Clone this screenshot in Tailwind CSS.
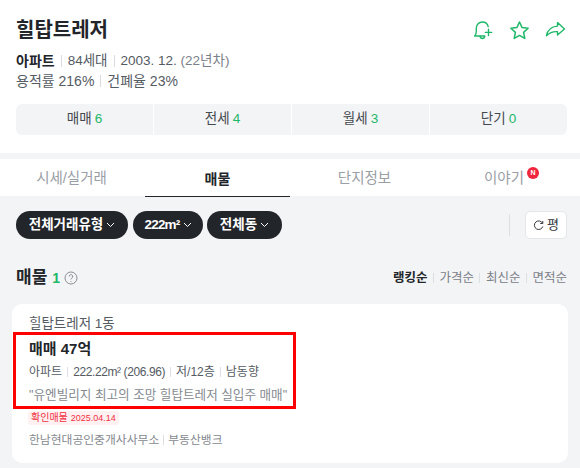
<!DOCTYPE html>
<html lang="ko">
<head>
<meta charset="UTF-8">
<title>힐탑트레저</title>
<script src="https://cdn.jsdelivr.net/npm/@tailwindcss/browser@4"></script>
</head>
<body class="bg-[#f3f4f6] text-[#222529] font-['Liberation_Sans','Noto_Sans_CJK_KR',sans-serif] overflow-hidden">
<div class="relative w-[580px] h-[468px] overflow-hidden">

  <!-- Header -->
  <header class="bg-white h-[153px] pl-4 pr-[13px] pt-[16px]">
    <div class="flex items-center justify-between h-[28px]">
      <h1 class="text-[20px] font-bold leading-[28px]">힐탑트레저</h1>
      <div class="flex items-center gap-[15px] mr-[1px]">
        <svg class="w-[21px] h-[21px]" viewBox="0 0 21 21" fill="none" stroke="#1fb868" stroke-width="1.4" stroke-linejoin="round" stroke-linecap="round"><path d="M11.500 16H1.600c1.300-1.300 1.700-2.400 1.700-4.500V8a6 6 0 0 1 6-6c3 0 5.300 2 5.900 4.600"/><path d="M7 16.200c.2 1.500 1.100 2.300 2.400 2.300s2.200-.8 2.400-2.300"/><path d="M15.500 9.200v6.400M12.300 12.400h6.400"/></svg>
        <svg class="w-[21px] h-[21px]" viewBox="0 0 21 21" fill="none" stroke="#1fb868" stroke-width="1.5" stroke-linejoin="round"><path d="M10.500 2l2.600 5.600 6 .7-4.500 4.100 1.200 6-5.300-3-5.300 3 1.200-6-4.500-4.100 6-.7z"/></svg>
        <svg class="w-[21px] h-[21px]" viewBox="0 0 21 21" fill="none" stroke="#1fb868" stroke-width="1.4" stroke-linejoin="round"><path d="M12.500 2.600l7 6.400-7 6v-3.300c-4.200-.3-7.800.8-11 4 .8-5 4.300-9 11-9.600z"/></svg>
      </div>
    </div>
    <div class="mt-[7px] text-[13.5px] leading-[20px] text-[#555b63]">
      <div class="flex items-center">
        <b class="text-[#222529] font-bold text-[14px]">아파트</b>
        <i class="w-px h-[12px] bg-[#d8dbe0] mx-[6px]"></i>
        <span>84세대</span>
        <i class="w-px h-[12px] bg-[#d8dbe0] mx-[6px]"></i>
        <span>2003. 12. <span class="text-[#7b8088]">(22년차)</span></span>
      </div>
      <div class="flex items-center text-[14px]">
        <span>용적률 216%</span>
        <i class="w-px h-[12px] bg-[#d8dbe0] mx-[6px]"></i>
        <span>건폐율 23%</span>
      </div>
    </div>
    <div class="mt-[13px] h-[31px] grid grid-cols-4 gap-px rounded-[6px] overflow-hidden text-[13.5px] text-[#44494f]">
      <div class="bg-[#f3f4f6] flex items-center justify-center gap-[3px]">매매 <span class="text-[#1fb868]">6</span></div>
      <div class="bg-[#f3f4f6] flex items-center justify-center gap-[3px]">전세 <span class="text-[#1fb868]">4</span></div>
      <div class="bg-[#f3f4f6] flex items-center justify-center gap-[3px]">월세 <span class="text-[#1fb868]">3</span></div>
      <div class="bg-[#f3f4f6] flex items-center justify-center gap-[3px]">단기 <span class="text-[#1fb868]">0</span></div>
    </div>
  </header>

  <!-- Tabs -->
  <nav class="mt-[6px] bg-white h-[37px] grid grid-cols-4 text-[14.5px] text-[#9a9ea5]">
    <div class="flex items-center justify-center pt-[3px] pr-[2px]">시세/실거래</div>
    <div class="flex items-center justify-center pt-[3px] -mb-px font-bold text-[14px] text-[#222529] border-b border-[#222529]">매물</div>
    <div class="flex items-center justify-center pt-[3px] pl-[4px]">단지정보</div>
    <div class="flex items-center justify-center pt-[3px] pr-[7px]">
      <span class="relative">이야기
        <span class="absolute -right-[15px] -top-[1px] w-[12px] h-[12px] rounded-full bg-[#f0263c] text-white text-[7px] font-bold leading-[12px] text-center">N</span>
      </span>
    </div>
  </nav>

  <!-- Filters -->
  <div class="flex items-center justify-between pl-4 pr-[13px] mt-[15px] h-[28px]">
    <div class="flex gap-[5px] text-[13.5px] font-bold text-white">
      <button class="h-[28px] w-[112px] rounded-full bg-[#222529] flex items-center justify-center gap-[3px]">전체거래유형<svg class="w-[9px] h-[6px]" viewBox="0 0 9 6" fill="none" stroke="#fff"><path d="M1 1l3.500 3.500L8 1"/></svg></button>
      <button class="h-[28px] w-[70px] rounded-full bg-[#222529] flex items-center justify-center gap-[3px]"><span class="tracking-[-0.8px]">222m²</span><svg class="w-[9px] h-[6px]" viewBox="0 0 9 6" fill="none" stroke="#fff"><path d="M1 1l3.500 3.500L8 1"/></svg></button>
      <button class="h-[28px] w-[75px] -ml-px rounded-full bg-[#222529] flex items-center justify-center gap-[3px]">전체동<svg class="w-[9px] h-[6px]" viewBox="0 0 9 6" fill="none" stroke="#fff"><path d="M1 1l3.500 3.500L8 1"/></svg></button>
    </div>
    <div class="flex items-center gap-[15px]">
      <i class="w-px h-[22px] bg-[#dcdfe3]"></i>
      <button class="w-[42px] h-[28px] bg-white border border-[#e4e6ea] rounded-[5px] flex items-center justify-center gap-[3px] text-[13px] text-[#33373c]">
        <svg class="w-[11px] h-[11px]" viewBox="0 0 11 11" fill="none" stroke="#33373c" stroke-width="1"><path d="M9.500 3.200A4.300 4.300 0 1 0 9.800 6.500"/><path d="M9.800 1v2.500H7.300"/></svg>평
      </button>
    </div>
  </div>

  <!-- Section title -->
  <div class="flex items-center justify-between pl-4 pr-[13px] mt-[27px] h-[24px]">
    <div class="flex items-center">
      <h2 class="text-[17px] font-bold">매물</h2>
      <span class="ml-[5px] text-[14px] font-bold text-[#1fb868]">1</span>
      <svg class="ml-[4px] w-[14px] h-[14px]" viewBox="0 0 14 14" fill="none" stroke="#8a8e95"><circle cx="7" cy="7" r="6"/><path d="M5.200 5.500a1.800 1.800 0 1 1 2.700 1.500c-.6.400-.9.700-.9 1.400"/><path d="M7 10v.8"/></svg>
    </div>
    <div class="flex items-center text-[12.5px] text-[#7b8088]">
      <b class="text-[#222529] font-bold">랭킹순</b>
      <i class="w-px h-[10px] bg-[#dcdfe3] mx-[5.5px]"></i>
      <span>가격순</span>
      <i class="w-px h-[10px] bg-[#dcdfe3] mx-[5.5px]"></i>
      <span>최신순</span>
      <i class="w-px h-[10px] bg-[#dcdfe3] mx-[5.5px]"></i>
      <span>면적순</span>
    </div>
  </div>

  <!-- Listing card -->
  <article class="mx-[12px] mt-[14px] h-[159px] bg-white rounded-[10px] px-[17px] pt-[11px]">
    <div class="text-[13.5px] leading-[18px] text-[#555b63]">힐탑트레저 1동</div>
    <div class="mt-[5px] text-[15px] font-bold leading-[22px]">매매 47억</div>
    <div class="mt-[3px] flex items-center text-[12px] leading-[18px] text-[#555b63]">
      <span>아파트</span>
      <i class="w-px h-[10px] bg-[#dcdfe3] mx-[5px]"></i>
      <span class="tracking-[-0.4px]">222.22m² (206.96)</span>
      <i class="w-px h-[10px] bg-[#dcdfe3] mx-[5px]"></i>
      <span>저/12층</span>
      <i class="w-px h-[10px] bg-[#dcdfe3] mx-[5px]"></i>
      <span>남동향</span>
    </div>
    <div class="mt-[5px] text-[12.6px] leading-[18px] text-[#85898f] whitespace-nowrap">"유엔빌리지 최고의 조망 힐탑트레저 실입주 매매"</div>
    <div class="mt-[7px] -ml-[1px] flex w-fit items-center h-[14px] px-[3px] gap-[3px] rounded-[3px] bg-[#fff0f1] text-[#f0303f] text-[10px] leading-[14px]">확인매물 <span class="text-[9px]">2025.04.14</span></div>
    <div class="mt-[6px] flex items-center text-[11.8px] leading-[18px] text-[#85898f]">
      <span>한남현대공인중개사사무소</span>
      <i class="w-px h-[10px] bg-[#dcdfe3] mx-[4px]"></i>
      <span>부동산뱅크</span>
    </div>
  </article>

  <!-- Red annotation box -->
  <div class="absolute left-[13px] top-[332px] w-[283px] h-[77px] border-[3px] border-[#ff0000]"></div>
</div>
</body>
</html>
